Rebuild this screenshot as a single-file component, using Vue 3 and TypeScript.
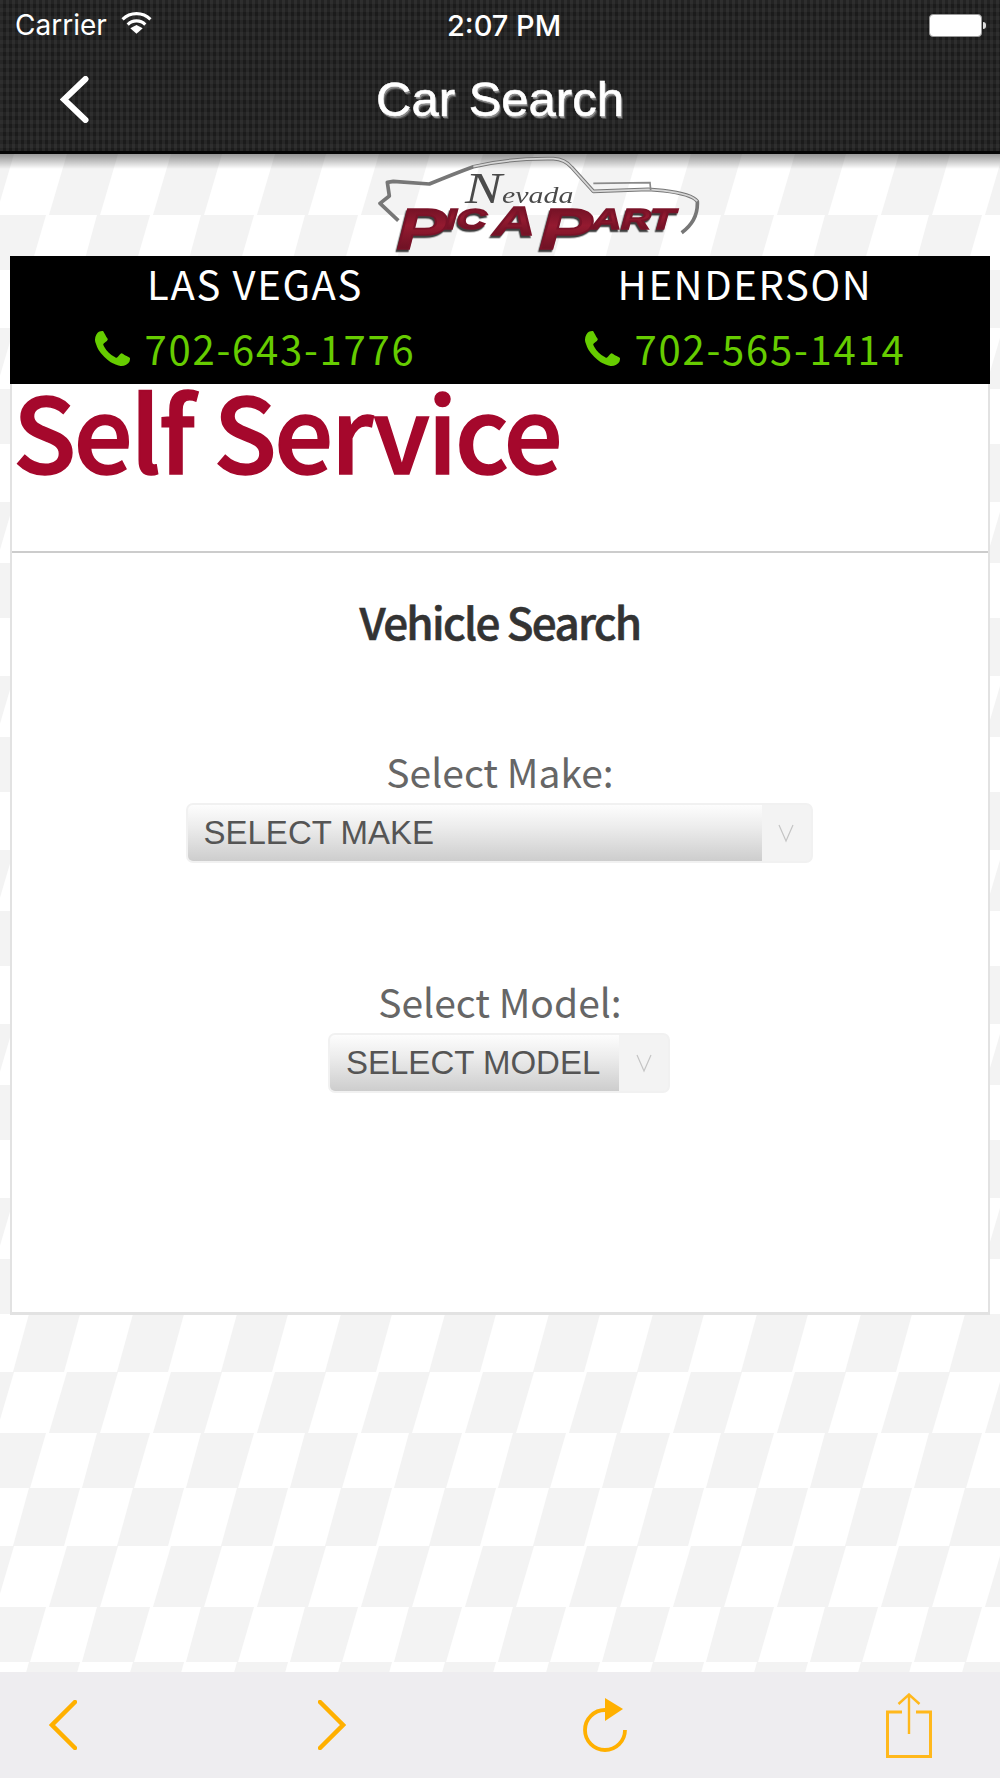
<script setup lang="ts">
interface Location {
  name: string
  phone: string
}

const locations: Location[] = [
  { name: 'LAS VEGAS', phone: '702-643-1776' },
  { name: 'HENDERSON', phone: '702-565-1414' },
]

const phonePath =
  'M1600 1240q0 27-10 70.5t-21 68.5q-21 50-122 106-94 51-186 51-27 0-53-3.5t-57.5-12.5-47-14.5-55.5-20.5-49-18q-98-35-175-83-127-79-264-216t-216-264q-48-77-83-175-3-9-18-49t-20.5-55.5-14.5-47-12.5-57.5-3.5-53q0-92 51-186 56-101 106-122 25-11 68.5-21t70.5-10q14 0 21 3 18 6 53 76 11 19 30 54t35 63.5 31 53.5q3 4 17.5 25t21.5 35.5 7 28.5q0 20-28.5 50t-62 55-62 53-28.5 46q0 9 5 22.5t8.5 20.5 14 24 11.5 19q76 137 174 235t235 174q2 1 19 11.5t24 14 20.5 8.5 22.5 5q18 0 46-28.5t53-62 55-62 50-28.5q14 0 28.5 7t35.5 21.5 25 17.5q25 15 53.5 31t63.5 35 54 30q70 35 76 53 3 7 3 21z'
</script>

<template>
  <div class="page">
    <!-- checker backdrop, sits under everything -->
    <svg class="checker" width="1000" height="1778" aria-hidden="true">
      <defs>
        <pattern id="flag" patternUnits="userSpaceOnUse" x="0" y="96" width="104" height="174">
          <rect width="104" height="174" fill="#fff" />
          <polygon points="29,0 80,0 64,58 13,58" fill="#f3f3f3" />
          <polygon points="67,58 118,58 100,119 49,119" fill="#f3f3f3" />
          <polygon points="-37,58 14,58 -4,119 -55,119" fill="#f3f3f3" />
          <polygon points="97,119 150,119 134,174 82,174" fill="#f3f3f3" />
          <polygon points="-7,119 46,119 30,174 -22,174" fill="#f3f3f3" />
        </pattern>
      </defs>
      <rect class="checker-fill" width="1000" height="1778" fill="url(#flag)" />
    </svg>

    <header class="topbar">
      <div class="status">
        <div class="status-left">
          <span>Carrier</span>
          <svg class="wifi" viewBox="0 0 30 22" width="31" height="23">
            <path d="M1.5 8 A19 19 0 0 1 28.5 8" fill="none" stroke="#fff" stroke-width="3" />
            <path d="M6.5 13 A12 12 0 0 1 23.5 13" fill="none" stroke="#fff" stroke-width="3" />
            <polygon points="9,16.5 15,13.5 21,16.5 15,22" fill="#fff" />
          </svg>
        </div>
        <span class="clock">2:07 PM</span>
        <div class="battery"><i class="battery-nub"></i></div>
      </div>
      <div class="navbar">
        <svg class="back" viewBox="0 0 29 47" width="29" height="47">
          <path d="M25.5 3 L4 23.5 L25.5 44" fill="none" stroke="#fff" stroke-width="6" stroke-linecap="round" stroke-linejoin="miter" />
        </svg>
        <h1 class="title">Car Search</h1>
      </div>
    </header>
    <div class="topbar-shadow"></div>

    <div class="logo-row">
      <svg class="logo" viewBox="-150 40 1320 300" width="440" height="100">
        <defs>
          <linearGradient id="maroon" x1="0" y1="0" x2="0" y2="1">
            <stop offset="0" stop-color="#5f0d20" />
            <stop offset="0.45" stop-color="#941a30" />
            <stop offset="1" stop-color="#5c0e1f" />
          </linearGradient>
        </defs>
        <g class="logo-soft">
          <path
            class="car-line"
            d="M205 240 L150 188 L178 166 L172 125 L190 122 L298 130 Q370 100 430 78 Q540 52 670 54 Q705 56 725 80 L790 152 L955 146 L1000 150 Q1085 160 1102 182 Q1105 240 1055 276"
          />
          <path
            class="car-shine"
            d="M430 78 Q540 52 670 54 Q705 56 725 80 L790 152 L955 146 L1000 150 Q1085 160 1102 182"
          />
          <path d="M790 128 L960 126 L962 148" fill="none" stroke="#8a8a8a" stroke-width="5" />
          <text class="nevada" x="405" y="186" textLength="325" lengthAdjust="spacingAndGlyphs"><tspan font-size="130">N</tspan><tspan font-size="70">evada</tspan></text>
          <g class="pic-letters">
            <text class="pic" x="200" y="324" font-size="172" textLength="150" lengthAdjust="spacingAndGlyphs">P</text>
            <text class="pic" x="345" y="266" font-size="88" textLength="125" lengthAdjust="spacingAndGlyphs">IC</text>
            <text class="pic" x="490" y="284" font-size="120" textLength="125" lengthAdjust="spacingAndGlyphs">A</text>
            <text class="pic" x="628" y="324" font-size="172" textLength="160" lengthAdjust="spacingAndGlyphs">P</text>
            <text class="pic" x="785" y="266" font-size="88" textLength="250" lengthAdjust="spacingAndGlyphs">ART</text>
          </g>
        </g>
      </svg>
    </div>

    <div class="contact">
      <div v-for="loc in locations" :key="loc.name" class="contact-col">
        <div class="city">{{ loc.name }}</div>
        <div class="phone">
          <svg class="phone-icon" viewBox="192 128 1408 1408" width="35" height="35">
            <path :d="phonePath" fill="#66cc00" />
          </svg>
          <span>{{ loc.phone }}</span>
        </div>
      </div>
    </div>

    <main class="panel">
      <div class="panel-head">
        <h2 class="headline">Self Service</h2>
      </div>
      <section class="search">
        <h3 class="search-title">Vehicle Search</h3>

        <label class="field-label field-make">Select Make:</label>
        <div class="fake-select fake-select--make">
          <span class="fake-value">SELECT MAKE</span>
          <span class="fake-arrow">
            <svg viewBox="0 0 16 20" width="16" height="20"><path d="M1 2 L8 18 L15 2" fill="none" stroke="#c4c4c4" stroke-width="1.2" /></svg>
          </span>
        </div>

        <label class="field-label field-model">Select Model:</label>
        <div class="fake-select fake-select--model">
          <span class="fake-value">SELECT MODEL</span>
          <span class="fake-arrow">
            <svg viewBox="0 0 16 20" width="16" height="20"><path d="M1 2 L8 18 L15 2" fill="none" stroke="#c4c4c4" stroke-width="1.2" /></svg>
          </span>
        </div>
      </section>
    </main>

    <div class="spacer"></div>

    <footer class="toolbar">
      <svg class="tool tool-back" viewBox="0 0 28 50" width="28" height="50">
        <path d="M26 2 L3 25 L26 48" fill="none" stroke="#ffb000" stroke-width="4.5" stroke-linecap="round" />
      </svg>
      <svg class="tool tool-forward" viewBox="0 0 28 50" width="28" height="50">
        <path d="M2 2 L25 25 L2 48" fill="none" stroke="#ffb000" stroke-width="4.5" stroke-linecap="round" />
      </svg>
      <svg class="tool tool-reload" viewBox="0 0 44 54" width="44" height="54">
        <path d="M22 12 A20 20 0 1 0 42 32" fill="none" stroke="#ffb000" stroke-width="3.8" />
        <polygon points="22,0 40,11 22,23" fill="#ffb000" />
      </svg>
      <svg class="tool tool-share" viewBox="0 0 46 65" width="46" height="65">
        <path d="M16 19 H1.5 V63.5 H44.5 V19 H30" fill="none" stroke="#ffb81c" stroke-width="3" />
        <path d="M23 41 V2 M12.5 11 L23 1.5 L33.5 11" fill="none" stroke="#ffb81c" stroke-width="2.4" />
      </svg>
    </footer>
  </div>
</template>

<style>
html,
body {
  margin: 0;
  background: #fff;
}
</style>

<style scoped>
.page {
  position: relative;
  width: 1000px;
  height: 1778px;
  display: flex;
  flex-direction: column;
  overflow: hidden;
  font-family: "Noto Sans CJK SC", "Noto Sans", sans-serif;
}

.checker {
  position: absolute;
  left: 0;
  top: 0;
}

.checker-fill {
  filter: blur(0.7px);
}

.topbar {
  position: relative;
  height: 151px;
  border-bottom: 3px solid #050505;
  background-color: #232323;
  background-image:
    linear-gradient(90deg, rgba(255, 255, 255, 0.05) 50%, transparent 50%),
    linear-gradient(0deg, rgba(0, 0, 0, 0.22) 50%, transparent 50%);
  background-size: 6px 6px, 6px 8px;
  color: #fff;
}

.topbar-shadow {
  position: absolute;
  left: 0;
  top: 154px;
  width: 100%;
  height: 15px;
  background: linear-gradient(180deg, rgba(0, 0, 0, 0.4), rgba(0, 0, 0, 0));
}

.status {
  position: relative;
  height: 50px;
  display: flex;
  align-items: center;
  justify-content: space-between;
  padding: 0 15px 0 15px;
  font-family: Inter, "Liberation Sans", sans-serif;
  font-size: 28px;
}

.status-left {
  display: flex;
  align-items: center;
  gap: 14px;
}

.wifi {
  margin-top: -6px;
}

.clock {
  position: absolute;
  left: 447px;
  font-size: 29px;
  font-weight: 500;
}

.battery {
  position: relative;
  width: 51px;
  height: 21px;
  margin-right: 3px;
  background: #fff;
  border: 1px solid #999;
  border-radius: 4px;
}

.battery-nub {
  position: absolute;
  right: -5px;
  top: 7px;
  width: 3px;
  height: 7px;
  background: #ddd;
  border-radius: 0 3px 3px 0;
}

.navbar {
  position: relative;
  height: 100px;
  display: flex;
  align-items: center;
  justify-content: center;
}

.back {
  position: absolute;
  left: 60px;
  top: 26px;
}

.title {
  margin: -2px 0 0;
  font-family: "Liberation Sans", Arial, sans-serif;
  font-size: 49px;
  font-weight: 400;
  color: #fff;
  -webkit-text-stroke: 0.6px #fff;
  text-shadow: 1px 2px 0 #8a8a8a, 2px 3px 1px #555;
}

.logo-row {
  position: relative;
  height: 102px;
  display: flex;
  justify-content: center;
}

.logo {
  overflow: visible;
}

.logo-soft {
  filter: blur(1.2px);
}

.car-line {
  fill: none;
  stroke: #777;
  stroke-width: 11;
  stroke-linejoin: round;
}

.car-shine {
  fill: none;
  stroke: #d6d6d6;
  stroke-width: 5;
  stroke-linejoin: round;
}

.nevada {
  font-family: "Liberation Serif", serif;
  font-style: italic;
  fill: #4a4a4a;
}

.pic-letters {
  filter: drop-shadow(-4px 7px 0 #3e3e3e);
}

.pic {
  font-family: "Liberation Sans", sans-serif;
  font-weight: 700;
  font-style: italic;
  fill: url(#maroon);
  stroke: #7a1228;
  stroke-width: 5;
}

.contact {
  position: relative;
  margin: 0 10px;
  height: 128px;
  display: grid;
  grid-template-columns: 1fr 1fr;
  background: #000;
}

.contact-col {
  display: flex;
  flex-direction: column;
  align-items: center;
}

.city {
  margin-top: 1px;
  font-size: 40px;
  line-height: 52px;
  letter-spacing: 1.65px;
  color: #fff;
}

.phone {
  display: flex;
  align-items: center;
  gap: 15px;
  margin-top: 14px;
  font-size: 40px;
  line-height: 50px;
  letter-spacing: 1.75px;
  color: #66cc00;
}

.panel {
  position: relative;
  margin: 0 10px;
  height: 928px;
  border: solid #e2e2e2;
  border-width: 0 2px 3px;
  background: #fff;
}

.panel-head {
  box-sizing: border-box;
  height: 169px;
  border-bottom: 2px solid #cccccc;
}

.headline {
  margin: 0;
  padding-left: 1px;
  font-size: 104px;
  line-height: 90px;
  font-weight: 500;
  letter-spacing: -2.4px;
  color: #a5082c;
  -webkit-text-stroke: 1.6px #a5082c;
}

.search {
  display: flex;
  flex-direction: column;
  align-items: center;
}

.search-title {
  margin: 35px 0 0;
  font-size: 44px;
  line-height: 66px;
  font-weight: 500;
  letter-spacing: -1.7px;
  color: #333;
  -webkit-text-stroke: 0.6px #333;
}

.field-label {
  font-size: 39px;
  line-height: 50px;
  color: #666;
}

.field-make {
  margin-top: 92px;
}

.field-model {
  margin-top: 113px;
}

.fake-select {
  display: flex;
  box-sizing: border-box;
  height: 60px;
  margin: 7px 2px 0 0;
  border: 2px solid #f1f1f1;
  border-radius: 7px;
  background: #f3f3f3;
  overflow: hidden;
}

.fake-select--make {
  width: 627px;
}

.fake-select--model {
  width: 342px;
}

.fake-value {
  flex: 1;
  padding-left: 16px;
  font-family: "Liberation Sans", Arial, sans-serif;
  font-size: 33px;
  line-height: 56px;
  color: #555;
  background: linear-gradient(180deg, #fdfdfd 0%, #ececec 40%, #cdcdcd 100%);
}

.fake-arrow {
  width: 49px;
  display: flex;
  align-items: center;
  justify-content: center;
}

.spacer {
  flex: 1;
}

.toolbar {
  position: relative;
  height: 106px;
  display: flex;
  align-items: center;
  background: #eeedf0;
}

.tool-back {
  margin-left: 49px;
}

.tool-forward {
  margin-left: 241px;
}

.tool-reload {
  margin-left: 237px;
}

.tool-share {
  margin-left: 259px;
}
</style>
